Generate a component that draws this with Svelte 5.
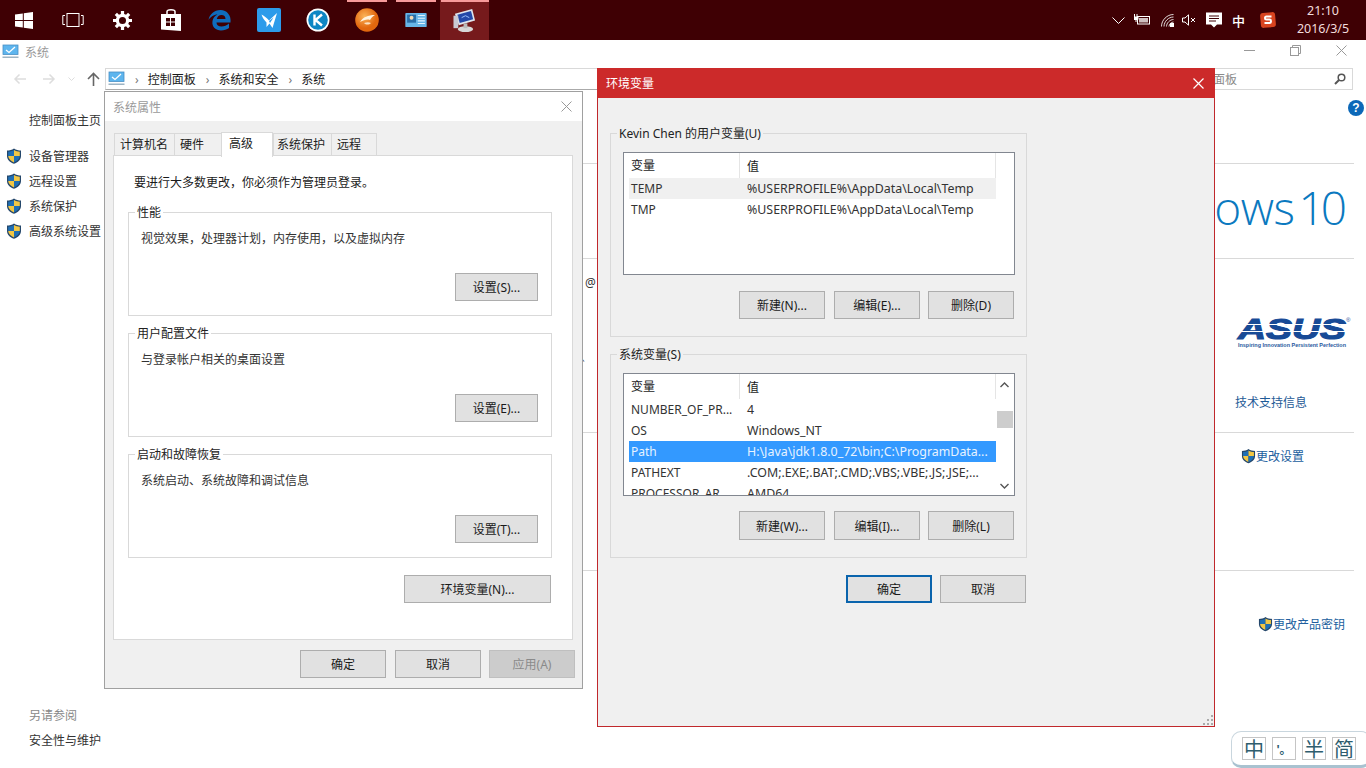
<script>
  const tabs = [
    { t: '计算机名', c: 'w60' }, { t: '硬件', c: 'w47' }, { t: '高级', c: 'w52 active' },
    { t: '系统保护', c: 'w58' }, { t: '远程', c: 'w46' }
  ];
  const groups = [
    { title: '性能', text: '视觉效果，处理器计划，内存使用，以及虚拟内存', btn: '设置(S)...' },
    { title: '用户配置文件', text: '与登录帐户相关的桌面设置', btn: '设置(E)...' },
    { title: '启动和故障恢复', text: '系统启动、系统故障和调试信息', btn: '设置(T)...' }
  ];
  const sideItems = ['设备管理器', '远程设置', '系统保护', '高级系统设置'];
  const userRows = [
    { n: 'TEMP', v: '%USERPROFILE%\\AppData\\Local\\Temp', c: 'soft' },
    { n: 'TMP', v: '%USERPROFILE%\\AppData\\Local\\Temp', c: '' }
  ];
  const sysRows = [
    { n: 'NUMBER_OF_PR...', v: '4', c: '' },
    { n: 'OS', v: 'Windows_NT', c: '' },
    { n: 'Path', v: 'H:\\Java\\jdk1.8.0_72\\bin;C:\\ProgramData...', c: 'sel' },
    { n: 'PATHEXT', v: '.COM;.EXE;.BAT;.CMD;.VBS;.VBE;.JS;.JSE;...', c: '' },
    { n: 'PROCESSOR_AR...', v: 'AMD64', c: '' }
  ];
</script>

{#snippet shield()}
  <svg class="shield" viewBox="0 0 16 16">
    <path d="M8 .5 C10 2 12.5 2.6 15 2.6 V8 C15 11.8 12 14.3 8 15.8 C4 14.3 1 11.8 1 8 V2.6 C3.5 2.6 6 2 8 .5Z" fill="#24476b"/>
    <path d="M8 2 V8 H2.2 V3.7 C4.2 3.6 6.2 3.1 8 2Z" fill="#1f6fb5"/>
    <path d="M8 2 C9.8 3.1 11.8 3.6 13.8 3.7 V8 H8Z" fill="#f2c744"/>
    <path d="M2.2 8 H8 V14.4 C4.8 13 2.4 11 2.2 8Z" fill="#f2c744"/>
    <path d="M8 8 H13.8 C13.6 11 11.2 13 8 14.4Z" fill="#1f6fb5"/>
  </svg>
{/snippet}

{#snippet monitor()}
  <svg class="mon" viewBox="0 0 17 16">
    <rect x="1" y="1" width="15" height="9.5" fill="#5db5ee" stroke="#4a8fc4" stroke-width=".8"/>
    <path d="M4 6 l3 2.4 l6 -5.4" stroke="#fff" stroke-width="1.3" fill="none"/>
    <rect x="0.5" y="12.5" width="16" height="1.5" fill="#9db4c4"/>
  </svg>
{/snippet}

{#snippet listHead()}
  <div class="lhead"><span class="hn">变量</span><span class="hv">值</span></div>
{/snippet}

<div class="desk">
  <header class="taskbar">
    <div class="tb"><svg width="18" height="17" viewBox="0 0 18 17"><path fill="#fff" d="M0 2.5 7.8 1.4V8H0ZM8.8 1.2 18 0V8H8.8ZM0 9H7.8V15.6L0 14.5ZM8.8 9H18V17L8.8 15.8Z"/></svg></div>
    <div class="tb"><svg width="22" height="14" viewBox="0 0 22 14" fill="none" stroke="#fff" stroke-width="1"><rect x="5" y=".5" width="12" height="13"/><path d="M3 2.5H.8V11.5H3M19 2.5H21.2V11.5H19"/></svg></div>
    <div class="tb"><svg width="19" height="19" viewBox="0 0 20 20"><circle cx="10" cy="10" r="5.4" fill="none" stroke="#fff" stroke-width="3.4"/><g stroke="#fff" stroke-width="3.4"><path d="M10 0V4M10 16V20M0 10H4M16 10H20M3 3 5.6 5.6M14.4 14.4 17 17M17 3 14.4 5.6M5.6 14.4 3 17"/></g></svg></div>
    <div class="tb"><svg width="22" height="24" viewBox="0 0 22 24"><path fill="#fff" d="M1 6H21V23L1 21.5Z"/><path d="M7 7V3.5C7 1 15 1 15 3.5V7" fill="none" stroke="#fff" stroke-width="1.5"/><path fill="#3f0004" d="M6 10H10V13.6H6ZM11 10H15V13.6H11ZM6 14.6H10V18H6ZM11 14.6H15V18H11Z"/></svg></div>
    <div class="tb"><svg width="24" height="24" viewBox="0 0 24 24"><path fill="#0f6cbd" d="M12.500 2C6 2 1.500 6.500 0.500 12 3 8 7 6.500 9.500 6.500 6.500 8 5 10 4.500 13 3.500 19 8 22.500 13 22.500 16 22.500 19 21.500 21 20V15.500C19 17.500 16 18.500 13.500 18.500 10.500 18.500 8.500 17 8.500 14.500H22.500C23.500 7.500 19 2 12.500 2ZM8.800 11C9.500 8.500 11 7 13.500 7 16 7 17.500 8.500 17.500 11Z"/></svg></div>
    <div class="tb"><svg width="24" height="24" viewBox="0 0 24 24"><rect width="24" height="24" rx="2" fill="#2d9bea"/><path fill="#fff" d="M4.500 6.500C7.500 8 10 10 12 12.500L20 5 15.500 20 12.500 15.500 9.500 19 9.500 14.500C7 12 5.500 9.500 4.500 6.500Z"/><path fill="#2d9bea" d="M12 13 16.500 9.500 13 15Z"/></svg></div>
    <div class="tb"><svg width="24" height="24" viewBox="0 0 24 24"><circle cx="12" cy="12" r="11.500" fill="#fff"/><circle cx="12" cy="12" r="9.800" fill="#0e86c4"/><path d="M8.500 6.500V17.500M16 6.500 9.500 12 16 17.500" stroke="#fff" stroke-width="2.400" fill="none"/></svg></div>
    <div class="tb"><svg width="24" height="24" viewBox="0 0 24 24"><defs><radialGradient id="og" cx=".4" cy=".35"><stop offset="0" stop-color="#fbb45a"/><stop offset="1" stop-color="#e2670e"/></radialGradient></defs><circle cx="12" cy="12" r="11.800" fill="url(#og)"/><path d="M5 14C8 9 13 7 20 7 17 9 16 10 15 12 12 11 9 12 5 14Z" fill="#fff3e0"/><path d="M9 15C12 14 14 14 16 15 14 17 11 17 9 15Z" fill="#fbe0c0"/></svg></div>
    <div class="tb"><svg width="22" height="16" viewBox="0 0 24 18"><rect width="24" height="16" y="1" rx="1" fill="#67b5e8"/><rect x="2" y="3" width="10" height="9" fill="#2a6ea8"/><circle cx="7" cy="6.500" r="2.200" fill="#f1d9b5"/><path d="M14 4H22M14 7H22M14 10H22M14 13H22" stroke="#e3f3ff" stroke-width="1.200"/></svg></div>
    <div class="tb on"><svg width="23" height="25" viewBox="0 0 24 26"><path fill="#dfe6ef" d="M2 6 20 1 23 13 6 18Z"/><path fill="#2448a8" d="M4.500 7 18.800 3.200 21 11.800 7 15.600Z"/><path d="M9 10 13 8 17 10" stroke="#9ec2ff" fill="none"/><ellipse cx="13" cy="22" rx="8" ry="3" fill="#d8d8d8"/><rect x="11" y="16" width="4" height="5" fill="#bbb"/><rect x="0.500" y="8" width="5" height="13" fill="#c9c9d2"/></svg></div>
    <span class="ind i1"></span><span class="ind i2"></span><span class="ind i3"></span>

    <div class="tray">
      <svg width="13" height="7" viewBox="0 0 13 7" fill="none" stroke="#fff"><path d="M.5.5 6.500 6.500 12.500.5"/></svg>
      <svg width="16" height="12" viewBox="0 0 16 12"><rect x="3.500" y="2.500" width="12" height="7.500" fill="none" stroke="#fff"/><rect x="5" y="4" width="9" height="4.500" fill="#fff" opacity=".75"/><path d="M.5 0V3M3 0V3M0 3H4V5.500H0ZM2 6V8" stroke="#fff" fill="#fff"/></svg>
      <svg width="13" height="13" viewBox="0 0 13 13" fill="none" stroke="#eee" stroke-width=".9"><path d="M.5 12.500C.5 6 6 .5 12.500.5M3 12.500C3 7.500 7.500 3 12.500 3M5.500 12.500C5.500 9 9 5.500 12.500 5.500M8 12.500C8 10.500 10 8 12.500 8"/><rect x="9" y="9" width="4" height="4" fill="#fff" stroke="none"/></svg>
      <svg width="14" height="12" viewBox="0 0 14 12" fill="none" stroke="#fff"><path d="M.5 4H3L6.500.8V11.200L3 8H.5Z"/><path d="M9 4 13 8M13 4 9 8"/></svg>
      <svg class="note" width="16" height="16" viewBox="0 0 16 16"><path fill="#fff" d="M0 .5H16V12.500H11L8 15.500 5 12.500H0Z"/><path d="M3 4H13M3 6.500H13M3 9H10" stroke="#3f0004"/></svg>
      <span class="zh">中</span>
      <svg class="sg" width="16" height="16" viewBox="0 0 16 16"><rect x=".5" y=".5" width="15" height="15" rx="3" fill="#d8431f" transform="rotate(-5 8 8)"/><path d="M11.500 4.500H6.500C4.500 4.500 4.500 7.500 6.500 7.500H9.500C11.500 7.500 11.500 11 9.500 11H4.500" fill="none" stroke="#fff" stroke-width="2"/></svg>
      <div class="clock"><div>21:10</div><div>2016/3/5</div></div>
    </div>
  </header>

  <div class="syswin">
    <div class="stitle">
      {@render monitor()}
      <span class="stext">系统</span>
      <div class="ctrls">
        <svg width="11" height="11" viewBox="0 0 11 11"><path d="M0 5.500H11" stroke="#999"/></svg>
        <svg width="11" height="11" viewBox="0 0 11 11" fill="none" stroke="#999"><rect x=".5" y="2.500" width="8" height="8"/><path d="M2.500 2.500V.5H10.500V8.500H8.500"/></svg>
        <svg width="11" height="11" viewBox="0 0 11 11" stroke="#999"><path d="M.5.5 10.500 10.500M10.500.5.500 10.500"/></svg>
      </div>
    </div>
    <div class="navrow">
      <div class="navbtns">
        <svg width="14" height="12" viewBox="0 0 14 12" fill="none" stroke="#ddd" stroke-width="1.500"><path d="M13 6H2M6.500 1.500 2 6 6.500 10.500"/></svg>
        <svg width="14" height="12" viewBox="0 0 14 12" fill="none" stroke="#ddd" stroke-width="1.500"><path d="M1 6H12M7.500 1.500 12 6 7.500 10.500"/></svg>
        <svg width="7" height="4" viewBox="0 0 7 4" fill="none" stroke="#ddd"><path d="M.5.5 3.500 3.500 6.500.5"/></svg>
        <svg width="13" height="14" viewBox="0 0 13 14" fill="none" stroke="#666" stroke-width="1.600"><path d="M6.500 14V2M1 7 6.500 1.500 12 7"/></svg>
      </div>
      <div class="addr">
        {@render monitor()}
        <span class="crumb">›</span><span>控制面板</span><span class="crumb">›</span><span>系统和安全</span><span class="crumb">›</span><span>系统</span>
      </div>
      <div class="search">
        <span>搜索控制面板</span>
        <svg width="12" height="12" viewBox="0 0 12 12" fill="none" stroke="#555" stroke-width="1.500"><circle cx="7.500" cy="4.500" r="3.300"/><path d="M5 7 1 11" stroke-width="2"/></svg>
      </div>
    </div>
    <div class="smain">
      <aside class="side">
        <div class="shome">控制面板主页</div>
        {#each sideItems as s}
          <div class="sitem">{@render shield()}<span>{s}</span></div>
        {/each}
        <div class="sfoot">
          <div class="seealso">另请参阅</div>
          <div class="sfl">安全性与维护</div>
        </div>
      </aside>
      <main class="content">
        <section class="sec s1"></section>
        <section class="sec s2"><span class="win10">ows</span><span class="win10 ten">10</span></section>
        <section class="sec s3">
          <span class="at">@</span>
          <span class="dotmark">、</span>
          <div class="asus">
            <svg width="116" height="36" viewBox="0 0 116 36">
              <text x="0" y="24" class="asustext" textLength="108" lengthAdjust="spacingAndGlyphs">ASUS</text>
              <path d="M0 9.500H110M0 16.500H110" stroke="#fff" stroke-width="1"/>
              <text x="108" y="7" class="reg">®</text>
              <text x="0" y="32" class="tagline" textLength="108" lengthAdjust="spacingAndGlyphs">Inspiring Innovation  Persistent Perfection</text>
            </svg>
          </div>
          <div class="support">技术支持信息</div>
        </section>
        <section class="sec s4">
          <div class="chg">{@render shield()}<span>更改设置</span></div>
        </section>
        <section class="s5">
          <div class="chg key">{@render shield()}<span>更改产品密钥</span></div>
        </section>
      </main>
      <div class="helpcol"><span class="help">?</span></div>
    </div>
  </div>

  <div class="dlg sysdlg">
    <div class="dtitle"><span>系统属性</span>
      <svg width="11" height="11" viewBox="0 0 11 11" stroke="#999"><path d="M.5.5 10.500 10.500M10.500.5.500 10.500"/></svg>
    </div>
    <div class="dbody">
      <div class="tabs">
        {#each tabs as t}<div class="tab {t.c}">{t.t}</div>{/each}
      </div>
      <div class="panel">
        <p class="intro">要进行大多数更改，你必须作为管理员登录。</p>
        {#each groups as g}
          <div class="group sg1">
            <span class="legend">{g.title}</span>
            <p class="gtext">{g.text}</p>
            <div class="gact"><button class="btn bs">{g.btn}</button></div>
          </div>
        {/each}
        <div class="envrow"><button class="btn benv">环境变量(N)...</button></div>
      </div>
      <div class="actions">
        <button class="btn b86">确定</button>
        <button class="btn b86">取消</button>
        <button class="btn b86 dis">应用(A)</button>
      </div>
    </div>
  </div>

  <div class="dlg envdlg">
    <div class="etitle"><span>环境变量</span>
      <svg width="11" height="11" viewBox="0 0 11 11" stroke="#fff" stroke-width="1.200"><path d="M.5.5 10.500 10.500M10.500.5.500 10.500"/></svg>
    </div>
    <div class="ebody">
      <div class="group eg">
        <span class="legend">Kevin Chen 的用户变量(U)</span>
        <div class="list">
          {@render listHead()}
          {#each userRows as r}
            <div class="row {r.c}"><span class="n">{r.n}</span><span class="v">{r.v}</span></div>
          {/each}
        </div>
        <div class="ebtns">
          <button class="btn b86">新建(N)...</button>
          <button class="btn b86">编辑(E)...</button>
          <button class="btn b86">删除(D)</button>
        </div>
      </div>
      <div class="group eg">
        <span class="legend">系统变量(S)</span>
        <div class="list withbar">
          {@render listHead()}
          {#each sysRows as r}
            <div class="row {r.c}"><span class="n">{r.n}</span><span class="v">{r.v}</span></div>
          {/each}
          <div class="sbar">
            <svg width="9" height="6" viewBox="0 0 9 6" fill="none" stroke="#555" stroke-width="1.400"><path d="M.5 5 4.500 1 8.500 5"/></svg>
            <span class="thumb"></span>
            <svg width="9" height="6" viewBox="0 0 9 6" fill="none" stroke="#555" stroke-width="1.400"><path d="M.5 1 4.500 5 8.500 1"/></svg>
          </div>
        </div>
        <div class="ebtns low">
          <button class="btn b86">新建(W)...</button>
          <button class="btn b86">编辑(I)...</button>
          <button class="btn b86">删除(L)</button>
        </div>
      </div>
      <div class="eact">
        <button class="btn b86 def">确定</button>
        <button class="btn b86">取消</button>
      </div>
    </div>
    <svg class="grip" width="10" height="10" viewBox="0 0 10 10" fill="#aaa"><rect x="8" y="0" width="2" height="2"/><rect x="4" y="4" width="2" height="2"/><rect x="8" y="4" width="2" height="2"/><rect x="0" y="8" width="2" height="2"/><rect x="4" y="8" width="2" height="2"/><rect x="8" y="8" width="2" height="2"/></svg>
  </div>

  <div class="ime">
    <span class="ik big">中</span>
    <span class="ik punct">'。</span>
    <span class="ik big">半</span>
    <span class="ik big">简</span>
  </div>
</div>

<style>
  :global(body) { margin: 0; background: #fff; }
  .desk {
    position: relative; width: 1366px; height: 768px; overflow: hidden; background: #fff;
    font-family: "Noto Sans", "Noto Sans CJK SC", sans-serif; font-size: 12px; color: #1a1a1a;
  }
  p { margin: 0; }
  svg { display: block; flex: none; }

  .taskbar { position: relative; display: flex; align-items: stretch; height: 40px; background: #3f0004; }
  .tb { width: 48.9px; display: flex; align-items: center; justify-content: center; }
  .tb.on { background: #761a1c; }
  .ind { position: absolute; top: 0; height: 2px; background: #f79a9a; }
  .i1 { left: 347px; width: 40px; }
  .i2 { left: 396px; width: 40px; }
  .i3 { left: 441px; width: 48px; }
  .tray { margin-left: auto; display: flex; align-items: center; color: #fff; }
  .tray > svg:nth-child(1) { margin-right: 9px; }
  .tray > svg:nth-child(2) { margin-right: 11px; }
  .tray > svg:nth-child(3) { margin-right: 8px; }
  .tray > svg:nth-child(4) { margin-right: 10px; }
  .zh { margin: 0 14px 0 10px; font-size: 13px; font-weight: 500; width: 14px; }
  .clock { width: 70px; margin: 0 8px 0 12px; text-align: center; font-size: 12.5px; line-height: 18px; color: #f2dcdc; }

  .syswin { display: flex; flex-direction: column; height: 728px; }
  .stitle { display: flex; align-items: center; height: 23px; padding-left: 2px; }
  .mon { width: 17px; height: 16px; }
  .stext { margin-left: 6px; color: #9a9a9a; }
  .ctrls { margin-left: auto; display: flex; gap: 35px; margin-right: 19px; margin-top: -2px; }
  .navrow { display: flex; align-items: center; height: 28px; margin-top: 2px; padding-right: 13px; }
  .navbtns { width: 105px; flex: none; display: flex; align-items: center; padding-left: 13px; gap: 15px; box-sizing: border-box; }
  .navbtns svg:nth-child(3) { margin-left: -3px; margin-right: -3px; }
  .addr {
    flex: 1; height: 22px; display: flex; align-items: center; gap: 10px; box-sizing: border-box;
    border: 1px solid #d9d9d9; border-bottom-color: #aaa; padding-left: 2px; margin-right: 8px; min-width: 0;
  }
  .crumb { color: #777; font-size: 12px; margin-right: -1px; }
  .crumb:last-of-type { margin-right: 1px; }
  .search {
    width: 193px; flex: none; height: 22px; display: flex; align-items: center; justify-content: space-between; box-sizing: border-box;
    border: 1px solid #d9d9d9; padding: 0 6px 0 4px; color: #8a8a8a;
  }

  .smain { display: flex; flex: 1; min-height: 0; }
  .side { width: 104px; flex: none; display: flex; flex-direction: column; padding-top: 19px; box-sizing: border-box; }
  .shome { padding-left: 29px; height: 31px; line-height: 18px; color: #333; white-space: nowrap; }
  .sitem { display: flex; align-items: center; height: 25px; padding-left: 6px; gap: 7px; color: #333; white-space: nowrap; }
  .shield { width: 16px; height: 16px; }
  .sfoot { margin-top: auto; padding: 0 0 18px 29px; white-space: nowrap; }
  .seealso { color: #888; height: 25px; line-height: 18px; }
  .sfl { color: #333; line-height: 18px; }

  .content { flex: 1; display: flex; flex-direction: column; min-width: 0; }
  .sec { border-bottom: 1px solid #d9d9d9; box-sizing: border-box; position: relative; }
  .s1 { height: 71px; }
  .s2 { height: 95px; display: flex; justify-content: flex-end; align-items: center; padding-bottom: 8px; gap: 4px; padding-right: 8px; }
  .win10 { font-family: "Open Sans", sans-serif; font-weight: 300; font-size: 46px; color: #0b79bf; letter-spacing: -0.5px; line-height: 1; }
  .ten { letter-spacing: -4px; margin-right: 3px; }
  .s3 { height: 174px; display: flex; flex-direction: column; align-items: flex-end; }
  .at { position: absolute; left: 481px; top: 15px; color: #333; }
  .dotmark { position: absolute; left: 477px; top: 90px; color: #555; font-size: 10px; }
  .asus { margin-top: 56px; height: 36px; }
  .asus svg { overflow: visible; }
  .asustext { font-family: "Liberation Sans", sans-serif; font-style: italic; font-weight: 700; font-size: 30px; fill: #174a96; stroke: #174a96; stroke-width: 1.1px; }
  .reg { font-family: "Liberation Sans", sans-serif; font-size: 6px; fill: #174a96; }
  .tagline { font-family: "Liberation Sans", sans-serif; font-weight: 700; font-size: 5px; fill: #2a5a9e; }
  .support { margin-top: 42px; margin-right: 47px; color: #1e5a96; }
  .s4 { height: 138px; display: flex; justify-content: flex-end; padding-top: 14px; }
  .chg { display: flex; align-items: center; height: 18px; color: #215e9e; white-space: nowrap; margin-right: 50px; }
  .chg .shield { width: 15px; height: 16px; }
  .s5 { flex: 1; display: flex; justify-content: flex-end; padding-top: 44px; }
  .chg.key { margin-right: 9px; }
  .helpcol { width: 12px; flex: none; }
  .help {
    display: block; width: 16px; height: 16px; margin: 7px 0 0 -6px; border-radius: 50%; background: #0c68b8;
    color: #fff; font: 700 12px/16px "Liberation Sans", sans-serif; text-align: center;
  }

  .dlg { position: absolute; box-sizing: border-box; display: flex; flex-direction: column; }
  .sysdlg { left: 104px; top: 91px; width: 479px; height: 598px; background: #f0f0f0; border: 1px solid #a0a0a0; }
  .dtitle { height: 29px; flex: none; display: flex; justify-content: space-between; align-items: center; background: #fff; color: #9a9a9a; padding: 0 10px 0 8px; }
  .dbody { flex: 1; display: flex; flex-direction: column; padding: 12px 7px 10px 8px; min-height: 0; }
  .tabs { display: flex; height: 22px; padding-left: 1px; position: relative; z-index: 1; }
  .tab { box-sizing: border-box; display: flex; align-items: center; background: #f0f0f0; border: 1px solid #d9d9d9; border-right: 0; border-bottom: 0; color: #222; padding-bottom: 2px; }
  .w60 { width: 60px; padding-left: 5px; } .w47 { width: 47px; padding-left: 5px; } .w52 { width: 52px; padding-left: 7px; } .w58 { width: 58px; padding-left: 3px; } .w46 { width: 46px; padding-left: 5px; border-right: 1px solid #d9d9d9; }
  .tab.active { background: #fff; height: 25px; margin-top: -1px; border-right: 1px solid #d9d9d9; padding-bottom: 5px; }
  .panel { flex: none; height: 485px; box-sizing: border-box; background: #fff; border: 1px solid #d9d9d9; padding: 18px 20px 0 14px; margin-right: 2px; display: flex; flex-direction: column; }
  .intro { padding-left: 6px; line-height: 18px; height: 38px; }

  .group { position: relative; box-sizing: border-box; border: 1px solid #d9d9d9; }
  .legend { position: absolute; top: -9px; left: 6px; padding: 0 2px; line-height: 17px; white-space: nowrap; background: #fff; color: #222; }
  .sg1 { height: 104px; margin-bottom: 17px; padding: 17px 13px 0 12px; display: flex; flex-direction: column; flex: none; }
  .gtext { line-height: 18px; color: #333; }
  .gact { display: flex; justify-content: flex-end; margin-top: 25px; }

  .btn {
    box-sizing: border-box; height: 28px; padding: 0; border: 1px solid #adadad; background: #e1e1e1;
    font: inherit; color: #1a1a1a; flex: none;
  }
  .bs { width: 83px; }
  .benv { width: 147px; }
  .b86 { width: 86px; }
  .dis { color: #8a8a8a; background: #ccc; border-color: #bfbfbf; }
  .def { border: 2px solid #0a64ad; }
  .envrow { display: flex; justify-content: flex-end; padding-right: 1px; }
  .actions { display: flex; justify-content: flex-end; gap: 9px; margin-top: 10px; }
  .actions .b86:nth-child(3) { margin-left: -1px; }

  .envdlg { left: 597px; top: 68px; width: 618px; height: 659px; background: #f0f0f0; border: 1px solid #c0282c; border-top: 0; }
  .etitle { height: 30px; flex: none; margin: 0 -1px; display: flex; justify-content: space-between; align-items: center; background: #cc2a2a; color: #fff; padding: 0 11px 0 9px; }
  .ebody { flex: 1; display: flex; flex-direction: column; padding: 35px 0 0 12px; min-height: 0; }
  .eg { width: 417px; height: 204px; margin-bottom: 17px; padding: 18px 12px 0 12px; flex: none; }
  .eg .legend { background: #f0f0f0; left: 6px; }
  .list { position: relative; box-sizing: border-box; height: 123px; border: 1px solid #828790; background: #fff; overflow: hidden; width: 392px; }
  .lhead { display: flex; height: 25px; align-items: center; width: 372px; border-right: 1px solid #e5e5e5; box-sizing: border-box; }
  .hn { width: 116px; padding-left: 7px; box-sizing: border-box; height: 100%; line-height: 25px; border-right: 1px solid #e5e5e5; }
  .hv { padding-left: 7px; }
  .row { display: flex; align-items: center; height: 21px; margin-left: 5px; width: 367px; white-space: nowrap; color: #333; }
  .row .n { width: 118px; padding-left: 2px; box-sizing: border-box; flex: none; }
  .row .v { white-space: nowrap; font-size: 12.4px; }
  .row.soft { background: #f0f0f0; }
  .row.sel { background: #3399ff; color: #e8f3ff; }
  .sbar { position: absolute; right: 1px; top: 0; bottom: 0; width: 17px; display: flex; flex-direction: column; align-items: center; padding: 8px 0 6px; box-sizing: border-box; background: #fff; }
  .thumb { display: block; width: 16px; height: 17px; background: #cdcdcd; margin-top: 23px; margin-bottom: auto; }
  .ebtns { display: flex; gap: 9px; justify-content: flex-end; margin-top: 16px; }
  .ebtns.low { margin-top: 15px; }
  .ebtns.low .btn { height: 29px; }
  .ebtns .b86:nth-child(3) { margin-left: -1px; }
  .eact { display: flex; justify-content: flex-end; gap: 8px; width: 416px; }
  .grip { position: absolute; right: 1px; bottom: 1px; }

  .ime {
    position: absolute; left: 1231px; top: 731px; width: 140px; height: 37px; box-sizing: border-box;
    background: #fff; border: 1px solid #c9d6de; border-bottom: 3px solid #a9c2d0; border-radius: 10px;
    display: flex; gap: 6px; padding: 5px 0 0 10px;
  }
  .ik {
    box-sizing: border-box; width: 24px; height: 23px; border: 1px solid #c5c5c5; display: flex; align-items: center; justify-content: center;
    color: #2e5d6e; flex: none;
  }
  .big { font-size: 20px; font-weight: 400; }
  .punct { font-size: 12px; font-weight: 700; }
</style>
